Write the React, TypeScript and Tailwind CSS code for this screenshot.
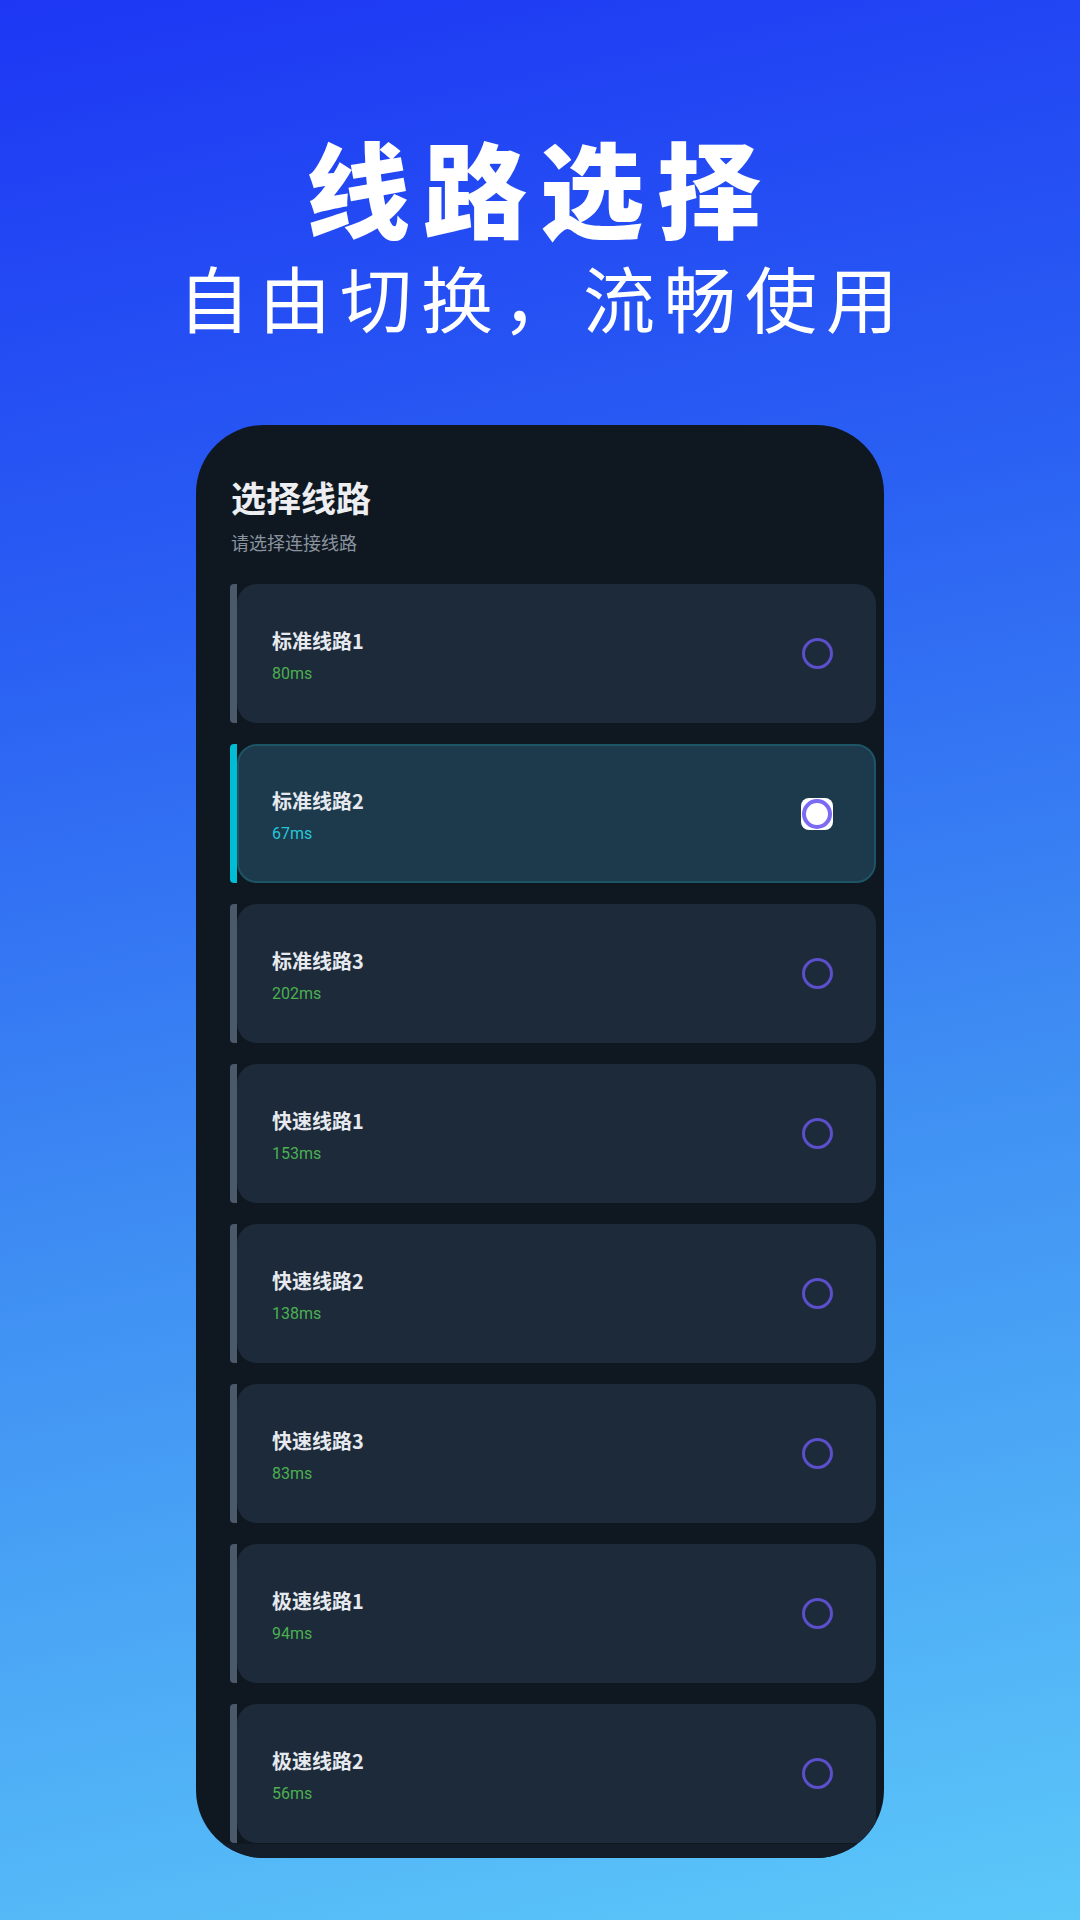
import React from "react";

type Line = { name: string; ms: string; selected?: boolean };

const lines: Line[] = [
  { name: "标准线路1", ms: "80ms" },
  { name: "标准线路2", ms: "67ms", selected: true },
  { name: "标准线路3", ms: "202ms" },
  { name: "快速线路1", ms: "153ms" },
  { name: "快速线路2", ms: "138ms" },
  { name: "快速线路3", ms: "83ms" },
  { name: "极速线路1", ms: "94ms" },
  { name: "极速线路2", ms: "56ms" },
];

const cjk = { fontFamily: '"Noto Sans CJK SC", "Noto Sans", sans-serif' };
const roboto = { fontFamily: 'Roboto, "Noto Sans", sans-serif' };

function Radio({ selected }: { selected?: boolean }) {
  if (selected) {
    return (
      <div className="w-[32px] h-[32px] rounded-[8px] bg-white flex items-center justify-center">
        <div className="w-[30px] h-[30px] rounded-full border-[4px] border-[#7b6af2] bg-white" />
      </div>
    );
  }
  return <div className="w-[31px] h-[31px] rounded-full border-[3px] border-[#5b4fcb]" />;
}

function Card({ line }: { line: Line }) {
  const sel = line.selected;
  return (
    <div className="flex h-[139px] shrink-0">
      <div
        className={
          "w-[7px] h-full rounded-l-[4px] " + (sel ? "bg-[#00bcd4]" : "bg-[#4b5a6b]")
        }
      />
      <div
        className={
          "flex-1 flex items-start justify-between rounded-[20px] pl-[35px] pr-[43px] " +
          (sel ? "bg-[#1c3a4b] border-[2px] border-[#1d5566]" : "bg-[#1c2a3a]")
        }
      >
        <div className={"flex flex-col " + (sel ? "pt-[45px] -ml-[2px]" : "pt-[47px]")}>
          <div className="text-[20px] leading-[20px] font-bold text-[#e6e9ee]" style={cjk}>
            {line.name}
          </div>
          <div
            className={
              "text-[16px] leading-[16px] mt-[15px] " + (sel ? "text-[#26c6da]" : "text-[#4caf50]")
            }
            style={roboto}
          >
            {line.ms}
          </div>
        </div>
        <div className={"self-center " + (sel ? "-mr-[2px]" : "")}>
          <Radio selected={sel} />
        </div>
      </div>
    </div>
  );
}

export default function App() {
  return (
    <div
      className="w-[1080px] h-[1920px] flex flex-col items-center overflow-hidden bg-[linear-gradient(168deg,#1d37f4_0%,#2a5ff3_30%,#3f8ff3_60%,#5cc8f9_100%)]"
      style={cjk}
    >
      <div
        className="mt-[134px] text-[104px] leading-[104px] font-black text-white tracking-[13px]"
        style={cjk}
      >
        线路选择
      </div>
      <div
        className="mt-[22px] text-[72px] leading-[72px] font-normal text-white tracking-[9px] pl-[5px]"
        style={cjk}
      >
        自由切换，流畅使用
      </div>

      <div className="mt-[93px] w-[688px] h-[1433px] rounded-[68px] bg-[#0f1821] overflow-hidden flex flex-col">
        <div className="pl-[35px] pt-[54px]">
          <div className="text-[35px] leading-[35px] font-semibold text-[#eceef1]" style={cjk}>
            选择线路
          </div>
          <div className="mt-[19px] text-[18px] leading-[18px] text-[#8a939e]" style={cjk}>
            请选择连接线路
          </div>
        </div>
        <div className="mt-[33px] pl-[34px] pr-[8px] flex flex-col gap-[21px]">
          {lines.map((l) => (
            <Card key={l.name} line={l} />
          ))}
        </div>
        <div className="flex-1 bg-[#141d2a] mt-[1px]" />
      </div>
    </div>
  );
}
